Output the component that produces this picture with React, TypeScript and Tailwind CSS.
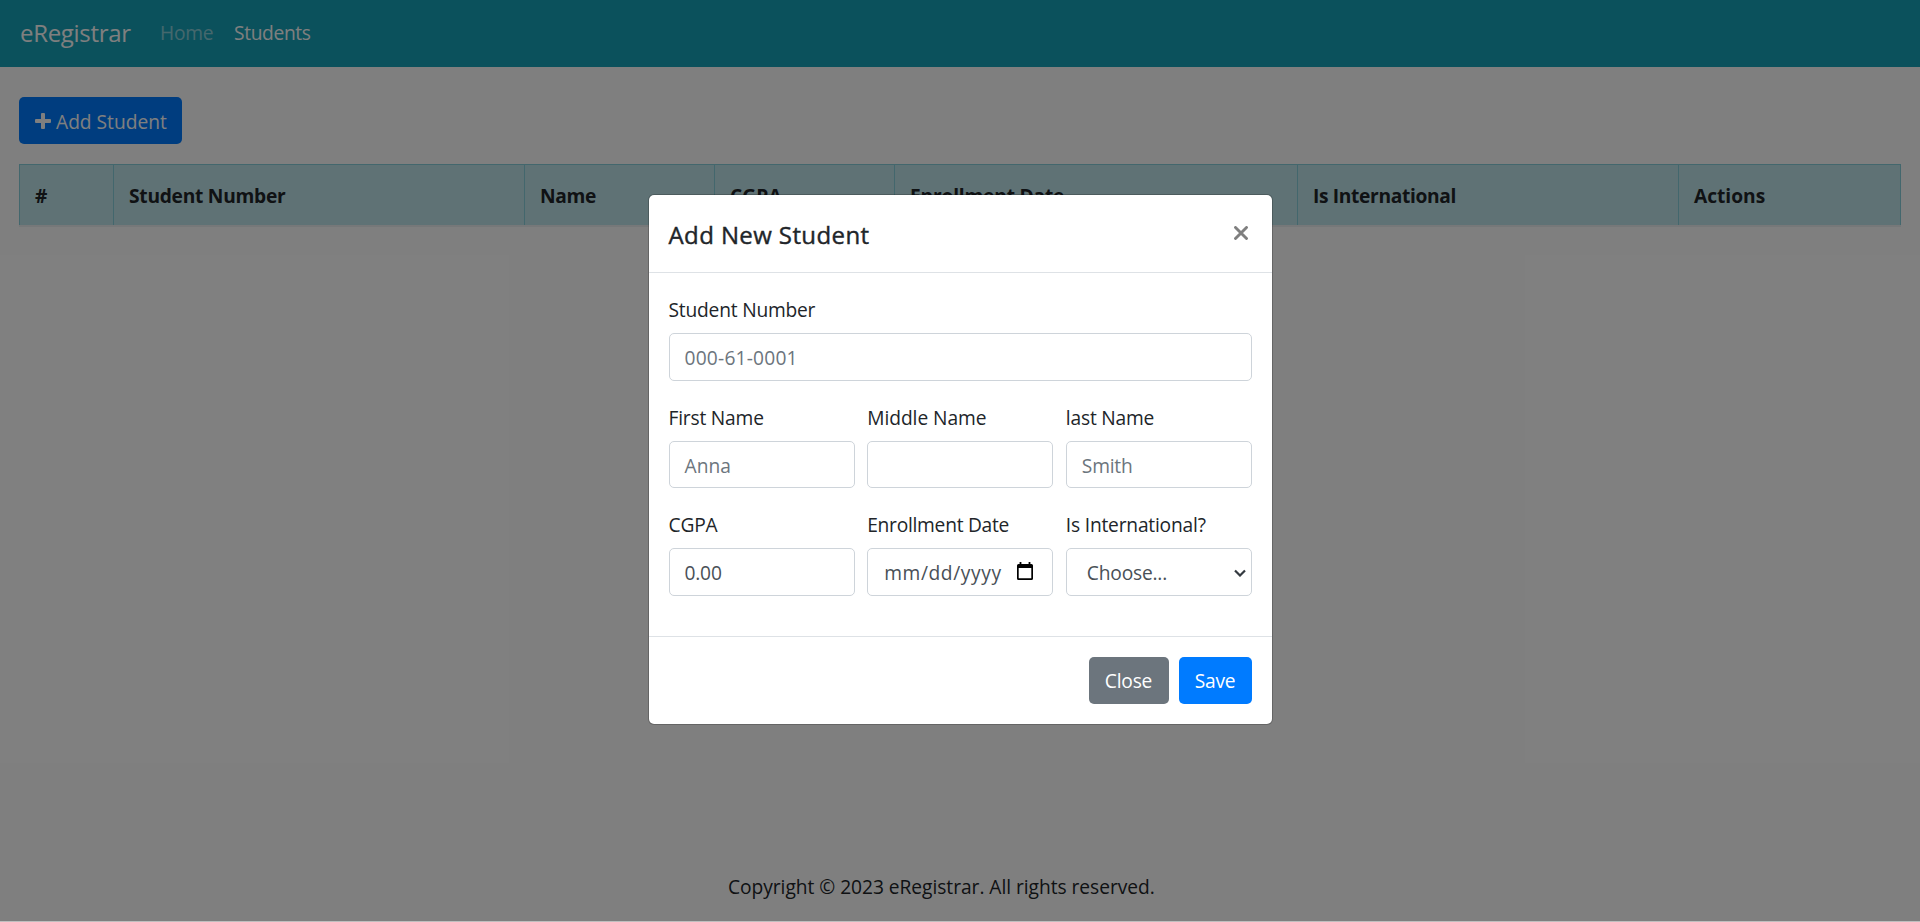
import type { ReactNode } from "react";

const columns = [
  { label: "#", width: "w-[94px]", spacing: "" },
  { label: "Student Number", width: "w-[411px]", spacing: "tracking-[-0.26px]" },
  { label: "Name", width: "w-[190px]", spacing: "tracking-[-0.35px]" },
  { label: "CGPA", width: "w-[180px]", spacing: "tracking-[0.1px]" },
  { label: "Enrollment Date", width: "w-[403px]", spacing: "" },
  { label: "Is International", width: "w-[381px]", spacing: "tracking-[-0.35px]" },
  { label: "Actions", width: "w-[223px] border-r", spacing: "tracking-[-0.02px]" },
];

type FieldProps = { label: string; spacing?: string; tall?: boolean; children?: ReactNode };

function Field({ label, spacing = "", tall, children }: FieldProps) {
  return (
    <div className="flex min-w-0 flex-1 flex-col">
      <div className="mb-[9px] flex h-[30px] items-center whitespace-nowrap pt-[2px] text-[#212529]">
        <span className={spacing}>{label}</span>
      </div>
      <div
        className={
          "flex items-center whitespace-nowrap rounded-[5px] border border-[#ced4da] bg-white px-[15px] pt-[2px] text-[#6c757d] " +
          (tall ? "h-12" : "h-[47px]")
        }
      >
        {children}
      </div>
    </div>
  );
}

function CalendarIcon() {
  return (
    <svg className="ml-[14px] mb-1 h-[18px] w-4 shrink-0" viewBox="0 0 16 18">
      <path d="M3.500 0v3M12.500 0v3" stroke="#000" strokeWidth="1.800" />
      <path d="M0 3.500Q0 2 1.500 2H14.500Q16 2 16 3.500V16.500Q16 18 14.500 18H1.500Q0 18 0 16.500ZM1.700 6V16.300H14.300V6Z" fill="#000" fillRule="evenodd" />
    </svg>
  );
}

export default function App() {
  return (
    <div className="relative flex h-[922px] w-[1920px] flex-col overflow-hidden bg-white font-['Open_Sans','Noto_Sans',sans-serif] text-[19.2px] leading-[30px] tracking-[-0.2px] text-[#212529]">
      <nav className="flex h-[67px] shrink-0 items-center bg-[#17a2b8] pb-px pl-5 text-white">
        <span className="w-[140px] text-[24px] tracking-[-0.3px]">eRegistrar</span>
        <span className="w-[74px] text-white/50">Home</span>
        <span className="tracking-[-0.35px]">Students</span>
      </nav>

      <main className="flex flex-1 flex-col px-[19px] pt-[30px]">
        <button className="flex h-[47px] w-[163px] items-center rounded-[5px] bg-[#007bff] pl-4 text-white">
          <svg className="mr-[5px] h-4 w-4 shrink-0" viewBox="0 0 16 16">
            <path d="M6 1q0-1 1-1h2q1 0 1 1v5h5q1 0 1 1v2q0 1-1 1h-5v5q0 1-1 1H7q-1 0-1-1v-5H1q-1 0-1-1V7q0-1 1-1h5z" fill="#fff" />
          </svg>
          <span className="whitespace-nowrap pt-[2px] tracking-normal">Add Student</span>
        </button>
        <div className="mt-5 flex h-[63px] w-[1882px] border-b-2 border-[#ecf0f3] font-bold">
          {columns.map((c) => (
            <div
              key={c.label}
              className={"flex shrink-0 items-center whitespace-nowrap border-l border-t border-[#86cfda] bg-[#bee5eb] pl-[15px] pt-[2px] " + c.width}
            >
              <span className={c.spacing}>{c.label}</span>
            </div>
          ))}
        </div>
      </main>

      <footer className="flex h-[50px] shrink-0 items-start pl-[728px]">
        <span className="whitespace-nowrap tracking-[-0.04px]">Copyright © 2023 eRegistrar. All rights reserved.</span>
      </footer>

      <div className="absolute inset-x-0 top-0 flex h-[921px] items-start justify-center bg-black/50 pt-[194px]">
        <section className="flex h-[531px] w-[625px] flex-col rounded-[6px] border border-black/20 bg-white bg-clip-padding">
          <header className="flex h-[78px] items-start justify-between border-b border-[#dee2e6] px-5 pt-[25px]">
            <h2 className="text-[24px] font-medium tracking-[0.4px] [-webkit-text-stroke:0.4px_#212529]">Add New Student</h2>
            <svg className="mr-1 mt-[6px] h-[14px] w-[14px]" viewBox="0 0 14 14">
              <path d="M1.500 1.500l11 11M12.500 1.500l-11 11" stroke="#7f7f7f" strokeWidth="2.900" strokeLinecap="round" />
            </svg>
          </header>
          <div className="flex h-[363px] flex-col pl-5 pr-[19.500px] pt-[21px]">
            <div className="flex h-[108px]">
              <Field label="Student Number" tall>
                <span className="tracking-[0.2px]">000-61-0001</span>
              </Field>
            </div>
            <div className="flex h-[107px] gap-[12.500px]">
              <Field label="First Name">
                <span className="tracking-normal">Anna</span>
              </Field>
              <Field label="Middle Name" spacing="tracking-[-0.04px]" />
              <Field label="last Name">Smith</Field>
            </div>
            <div className="flex gap-[12.500px]">
              <Field label="CGPA" tall>
                <span className="text-[#495057]">0.00</span>
              </Field>
              <Field label="Enrollment Date" spacing="tracking-[-0.26px]" tall>
                <span className="ml-px mr-px tracking-[0.6px] text-[#495057]">mm/dd/yyyy</span>
                <CalendarIcon />
              </Field>
              <Field label="Is International?" tall>
                <span className="ml-[5px] text-[#495057]">Choose...</span>
                <svg className="-mr-[10px] ml-auto h-2 w-3" viewBox="0 0 12 8">
                  <path d="M1 1.500l5 5 5-5" fill="none" stroke="#343a40" strokeWidth="2.200" />
                </svg>
              </Field>
            </div>
          </div>
          <footer className="flex flex-1 items-start justify-end gap-[10px] border-t border-[#dee2e6] px-5 pt-5 text-white">
            <button className="h-[47px] w-20 rounded-[5px] bg-[#6c757d] pt-px">Close</button>
            <button className="h-[47px] w-[73px] rounded-[5px] bg-[#007bff] pt-px">Save</button>
          </footer>
        </section>
      </div>
      <div className="absolute inset-x-0 bottom-0 h-px bg-[#bfbfbf]" />
    </div>
  );
}
